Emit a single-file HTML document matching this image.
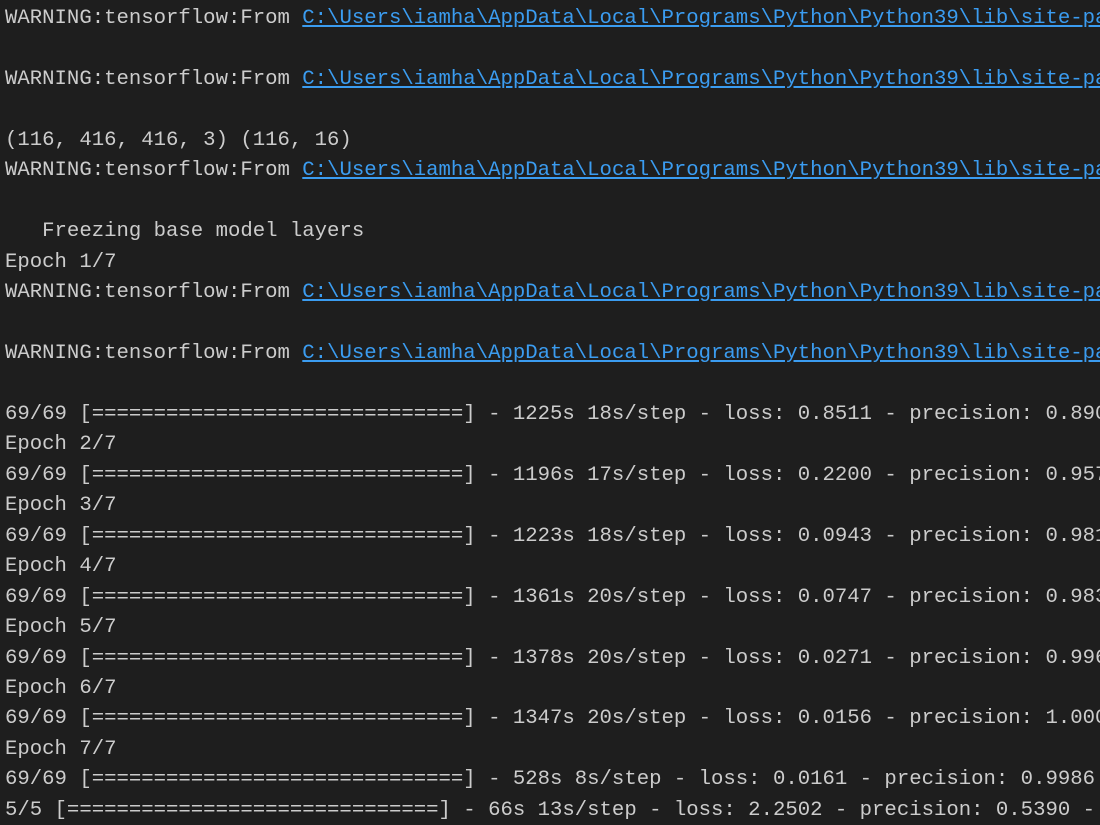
<!DOCTYPE html>
<html><head><meta charset="utf-8"><style>
html,body{margin:0;padding:0;background:#1e1e1e;width:1100px;height:825px;overflow:hidden}
pre{margin:0;position:absolute;left:5px;top:4px;width:1095px;height:821px;overflow:hidden;font-family:"Liberation Mono",monospace;font-size:20.65px;line-height:30.46px;color:#cccccc;white-space:pre}
a{color:#3b9cf0;text-decoration:underline}
</style></head><body><pre>WARNING:tensorflow:From <a>C:\Users\iamha\AppData\Local\Programs\Python\Python39\lib\site-packages</a>

WARNING:tensorflow:From <a>C:\Users\iamha\AppData\Local\Programs\Python\Python39\lib\site-packages</a>

(116, 416, 416, 3) (116, 16)
WARNING:tensorflow:From <a>C:\Users\iamha\AppData\Local\Programs\Python\Python39\lib\site-packages</a>

   Freezing base model layers
Epoch 1/7
WARNING:tensorflow:From <a>C:\Users\iamha\AppData\Local\Programs\Python\Python39\lib\site-packages</a>

WARNING:tensorflow:From <a>C:\Users\iamha\AppData\Local\Programs\Python\Python39\lib\site-packages</a>

69/69 [==============================] - 1225s 18s/step - loss: 0.8511 - precision: 0.8902
Epoch 2/7
69/69 [==============================] - 1196s 17s/step - loss: 0.2200 - precision: 0.9571
Epoch 3/7
69/69 [==============================] - 1223s 18s/step - loss: 0.0943 - precision: 0.9813
Epoch 4/7
69/69 [==============================] - 1361s 20s/step - loss: 0.0747 - precision: 0.9835
Epoch 5/7
69/69 [==============================] - 1378s 20s/step - loss: 0.0271 - precision: 0.9964
Epoch 6/7
69/69 [==============================] - 1347s 20s/step - loss: 0.0156 - precision: 1.0000
Epoch 7/7
69/69 [==============================] - 528s 8s/step - loss: 0.0161 - precision: 0.9986 -
5/5 [==============================] - 66s 13s/step - loss: 2.2502 - precision: 0.5390 - r</pre></body></html>
